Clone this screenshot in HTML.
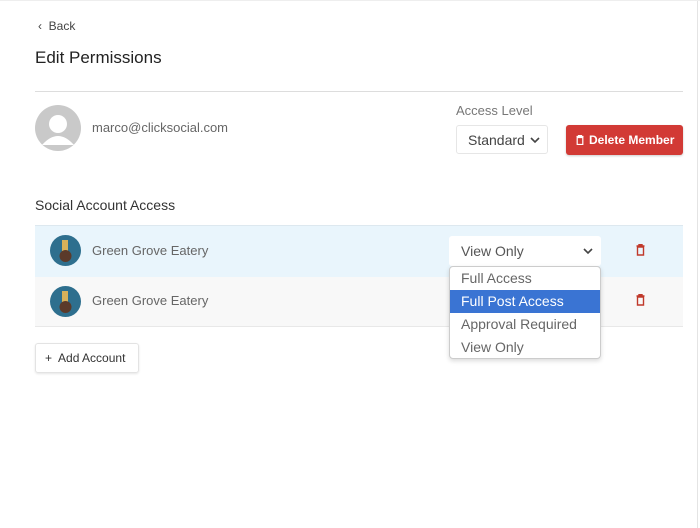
<!DOCTYPE html><html><head><style>
body{margin:0;width:700px;height:528px;background:#fff;font-family:"Liberation Sans",sans-serif;position:relative;overflow:hidden}
.a{position:absolute}
.t{color:#666;font-size:13px}
</style></head><body>
<div class="a" style="right:2px;top:0;width:1px;height:528px;background:#e4e4e4"></div>
<div class="a" style="left:0;top:0;width:700px;height:1px;background:#eee"></div>
<div class="a" style="left:38px;top:19px;font-size:12px;color:#444">‹&nbsp;&nbsp;Back</div>
<div class="a" style="left:35px;top:48px;font-size:17px;color:#222">Edit Permissions</div>
<div class="a" style="left:35px;top:91px;width:648px;height:1px;background:#ddd"></div>
<svg class="a" style="left:35px;top:105px" width="46" height="46"><circle cx="23" cy="23" r="23" fill="#c9c9c9"/><circle cx="23" cy="19" r="9" fill="#fff"/><path d="M7 40 Q23 22 39 40 Z" fill="#fff"/></svg>
<div class="a t" style="left:92px;top:120px">marco@clicksocial.com</div>
<div class="a" style="left:456px;top:103px;font-size:13px;color:#777">Access Level</div>
<div class="a" style="left:456px;top:125px;width:92px;height:29px;border:1px solid #e6e6e6;border-radius:3px;box-sizing:border-box;font-size:14px;color:#444;line-height:28px;padding-left:11px">Standard<svg style="position:absolute;right:7px;top:11px" width="10" height="7"><path d="M1 1 L5 5 L9 1" stroke="#444" stroke-width="1.6" fill="none"/></svg></div>
<div class="a" style="left:566px;top:125px;width:117px;height:30px;background:#d23a35;border-radius:3px;color:#fff;font-size:12px;font-weight:bold;line-height:30px;box-shadow:0 1px 2px rgba(0,0,0,.2)"><svg style="position:absolute;left:10px;top:10px" width="8" height="10"><path d="M0.5 1.5 H7.5 M2.5 1.5 V0.5 H5.5 V1.5 M1.2 2.5 V9.5 H6.8 V2.5 Z" stroke="#fff" stroke-width="1.2" fill="none"/></svg><span style="position:absolute;left:23px">Delete Member</span></div>
<div class="a" style="left:35px;top:197px;font-size:14px;color:#333">Social Account Access</div>
<div class="a" style="left:35px;top:225px;width:648px;height:51px;background:#e9f5fc;border-top:1px solid #dde8ef"></div>
<div class="a" style="left:35px;top:277px;width:648px;height:49px;background:#f8f8f8;border-bottom:1px solid #e8e8e8"></div>
<svg class="a" style="left:50px;top:235px" width="31" height="31"><circle cx="15.5" cy="15.5" r="15.5" fill="#2e6f8e"/><rect x="12" y="5" width="6" height="12" fill="#d9b25a"/><circle cx="15.5" cy="21" r="6" fill="#5b3a2a"/></svg>
<svg class="a" style="left:50px;top:286px" width="31" height="31"><circle cx="15.5" cy="15.5" r="15.5" fill="#2e6f8e"/><rect x="12" y="5" width="6" height="12" fill="#d9b25a"/><circle cx="15.5" cy="21" r="6" fill="#5b3a2a"/></svg>
<div class="a t" style="left:92px;top:243px">Green Grove Eatery</div>
<div class="a t" style="left:92px;top:293px">Green Grove Eatery</div>
<div class="a" style="left:449px;top:236px;width:152px;height:30px;background:#fff;border-radius:3px;font-size:14px;color:#555;line-height:30px;padding-left:12px;box-sizing:border-box">View Only<svg style="position:absolute;right:8px;top:12px" width="10" height="7"><path d="M1 1 L5 5 L9 1" stroke="#444" stroke-width="1.6" fill="none"/></svg></div>
<svg class="a" style="left:636px;top:244px" width="9" height="12"><path d="M0.5 2 H8.5 M3 2 V0.7 H6 V2 M1.5 3 V11 H7.5 V3 Z" stroke="#c0392b" stroke-width="1.4" fill="none"/></svg>
<svg class="a" style="left:636px;top:294px" width="9" height="12"><path d="M0.5 2 H8.5 M3 2 V0.7 H6 V2 M1.5 3 V11 H7.5 V3 Z" stroke="#c0392b" stroke-width="1.4" fill="none"/></svg>
<div class="a" style="left:449px;top:266px;width:152px;height:93px;background:#fff;border:1px solid #ccc;border-radius:4px;box-sizing:border-box;box-shadow:0 2px 5px rgba(0,0,0,.15);font-size:14px;color:#666">
<div style="height:23px;line-height:22px;padding-left:11px">Full Access</div>
<div style="height:23px;line-height:23px;padding-left:11px;background:#3a74d3;color:#fff">Full Post Access</div>
<div style="height:23px;line-height:23px;padding-left:11px">Approval Required</div>
<div style="height:23px;line-height:23px;padding-left:11px">View Only</div></div>
<div class="a" style="left:35px;top:343px;width:104px;height:30px;border:1px solid #e3e3e3;border-radius:3px;box-sizing:border-box;box-shadow:0 1px 2px rgba(0,0,0,.1);font-size:12px;color:#333;line-height:29px;padding-left:9px">+&nbsp; Add Account</div>
</body></html>
